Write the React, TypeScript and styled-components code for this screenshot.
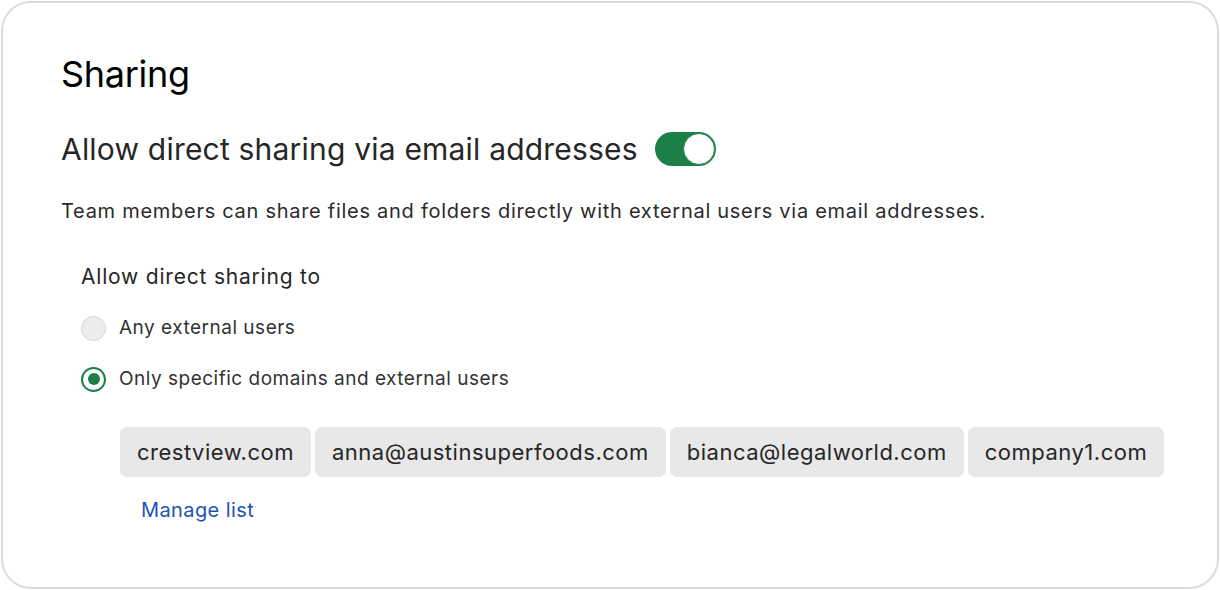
import React from "react";
import styled, { createGlobalStyle } from "styled-components";

const Global = createGlobalStyle`
  html, body { margin: 0; padding: 0; background: #ffffff; }
  body { font-family: Inter, "Noto Sans", sans-serif; -webkit-font-smoothing: antialiased; }
`;

const Card = styled.section`
  box-sizing: border-box;
  width: 1218px;
  height: 588px;
  margin: 1px;
  border: 2px solid #dcdcdc;
  border-radius: 30px;
  padding: 50px 58px 0 58px;
  color: #1e1919;
`;

const Title = styled.h1`
  margin: 0;
  font-size: 36px;
  font-weight: 400;
  line-height: 42px;
  color: #000;
  letter-spacing: -0.3px;
`;

const SettingRow = styled.div`
  display: flex;
  align-items: center;
  gap: 17px;
  margin-top: 36px;
`;

const SettingTitle = styled.h2`
  margin: 0;
  font-size: 30px;
  font-weight: 400;
  line-height: 36px;
  letter-spacing: 0.2px;
  color: #262626;
`;

const Toggle = styled.button<{ $on: boolean }>`
  position: relative;
  width: 61px;
  height: 34px;
  border-radius: 17px;
  border: none;
  padding: 0;
  background: ${(p) => (p.$on ? "#1b7f47" : "#cfcfcf")};
  cursor: pointer;
`;

const Knob = styled.span<{ $on: boolean }>`
  position: absolute;
  top: 1px;
  left: ${(p) => (p.$on ? "28px" : "1px")};
  width: 32px;
  height: 32px;
  box-sizing: border-box;
  border-radius: 50%;
  background: #fff;
  border: 1.5px solid #1b7f47;
`;

const Description = styled.p`
  margin: 30px 0 0 0;
  font-size: 20px;
  line-height: 28px;
  letter-spacing: 0.72px;
  color: #2b2b2b;
`;

const Group = styled.div`
  padding-left: 20px;
  margin-top: 38px;
`;

const GroupLabel = styled.div`
  font-size: 21px;
  line-height: 28px;
  letter-spacing: 0.8px;
  color: #262626;
`;

const RadioList = styled.div`
  display: flex;
  flex-direction: column;
  gap: 23px;
  margin-top: 23px;
`;

const RadioRow = styled.label`
  display: flex;
  align-items: center;
  gap: 13px;
  font-size: 19px;
  line-height: 28px;
  letter-spacing: 0.5px;
  color: #333;
`;

const RadioCircle = styled.span<{ $checked: boolean }>`
  box-sizing: border-box;
  width: 25px;
  height: 25px;
  border-radius: 50%;
  display: flex;
  align-items: center;
  justify-content: center;
  background: ${(p) => (p.$checked ? "#fff" : "#ececec")};
  border: ${(p) => (p.$checked ? "2px solid #1b7f47" : "1.5px solid #d6d6d6")};
`;

const RadioDot = styled.span`
  width: 12px;
  height: 12px;
  border-radius: 50%;
  background: #1b7f47;
`;

const Chips = styled.div`
  display: flex;
  gap: 4px;
  margin-top: 34px;
  padding-left: 39px;
`;

const Chip = styled.span`
  display: inline-flex;
  align-items: center;
  height: 50px;
  padding: 0 17px;
  border-radius: 7px;
  background: #e8e8e8;
  font-size: 22px;
  letter-spacing: 0.5px;
  color: #262626;
`;

const ManageLink = styled.a`
  display: inline-block;
  margin-top: 21px;
  margin-left: 80px;
  font-size: 20px;
  letter-spacing: 0.4px;
  color: #1f53b0;
  text-decoration: none;
  cursor: pointer;
`;

const domains = [
  "crestview.com",
  "anna@austinsuperfoods.com",
  "bianca@legalworld.com",
  "company1.com",
];

export default function App() {
  return (
    <>
      <Global />
      <Card>
        <Title>Sharing</Title>
        <SettingRow>
          <SettingTitle>Allow direct sharing via email addresses</SettingTitle>
          <Toggle $on aria-pressed="true">
            <Knob $on />
          </Toggle>
        </SettingRow>
        <Description>
          Team members can share files and folders directly with external users via email addresses.
        </Description>
        <Group>
          <GroupLabel>Allow direct sharing to</GroupLabel>
          <RadioList>
            <RadioRow>
              <RadioCircle $checked={false} />
              Any external users
            </RadioRow>
            <RadioRow>
              <RadioCircle $checked>
                <RadioDot />
              </RadioCircle>
              Only specific domains and external users
            </RadioRow>
          </RadioList>
          <Chips>
            {domains.map((d) => (
              <Chip key={d}>{d}</Chip>
            ))}
          </Chips>
        </Group>
        <ManageLink>Manage list</ManageLink>
      </Card>
    </>
  );
}
